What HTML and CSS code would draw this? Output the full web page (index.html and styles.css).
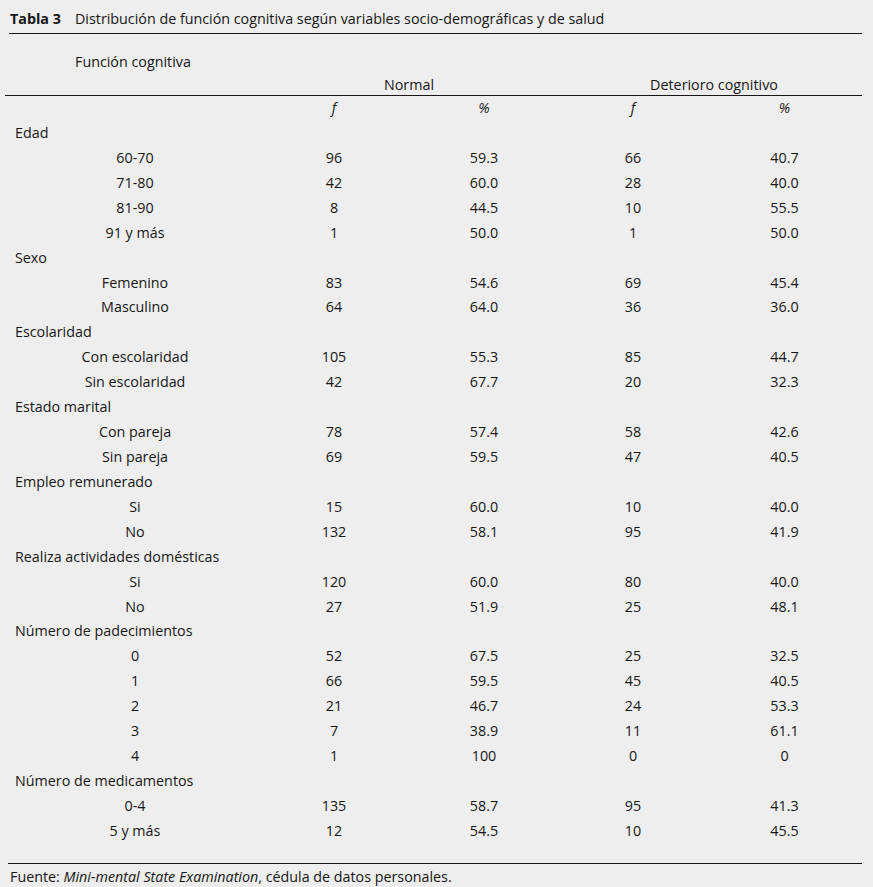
FILE: index.html
```html
<!DOCTYPE html>
<html lang="es">
<head>
<meta charset="utf-8">
<title>Tabla 3</title>
<link rel="stylesheet" href="styles.css">
</head>
<body>
<div class="page">
  <div class="caption"><span class="tnum">Tabla 3</span><span class="ttext">Distribución de función cognitiva según variables socio-demográficas y de salud</span></div>
  <div class="head1">Función cognitiva</div>
  <div class="head2">
    <div></div>
    <div class="span2">Normal</div>
    <div class="span2 det">Deterioro cognitivo</div>
  </div>
  <div class="row sub">
    <div></div><div class="it">f</div><div class="it">%</div><div class="it">f</div><div class="it">%</div>
  </div>
  <div class="body">
    <div class="row"><div class="cat">Edad</div></div>
    <div class="row"><div class="lab">60-70</div><div>96</div><div>59.3</div><div>66</div><div>40.7</div></div>
    <div class="row"><div class="lab">71-80</div><div>42</div><div>60.0</div><div>28</div><div>40.0</div></div>
    <div class="row"><div class="lab">81-90</div><div>8</div><div>44.5</div><div>10</div><div>55.5</div></div>
    <div class="row"><div class="lab">91 y más</div><div>1</div><div>50.0</div><div>1</div><div>50.0</div></div>
    <div class="row"><div class="cat">Sexo</div></div>
    <div class="row"><div class="lab">Femenino</div><div>83</div><div>54.6</div><div>69</div><div>45.4</div></div>
    <div class="row"><div class="lab">Masculino</div><div>64</div><div>64.0</div><div>36</div><div>36.0</div></div>
    <div class="row"><div class="cat">Escolaridad</div></div>
    <div class="row"><div class="lab">Con escolaridad</div><div>105</div><div>55.3</div><div>85</div><div>44.7</div></div>
    <div class="row"><div class="lab">Sin escolaridad</div><div>42</div><div>67.7</div><div>20</div><div>32.3</div></div>
    <div class="row"><div class="cat">Estado marital</div></div>
    <div class="row"><div class="lab">Con pareja</div><div>78</div><div>57.4</div><div>58</div><div>42.6</div></div>
    <div class="row"><div class="lab">Sin pareja</div><div>69</div><div>59.5</div><div>47</div><div>40.5</div></div>
    <div class="row"><div class="cat">Empleo remunerado</div></div>
    <div class="row"><div class="lab">Si</div><div>15</div><div>60.0</div><div>10</div><div>40.0</div></div>
    <div class="row"><div class="lab">No</div><div>132</div><div>58.1</div><div>95</div><div>41.9</div></div>
    <div class="row"><div class="cat">Realiza actividades domésticas</div></div>
    <div class="row"><div class="lab">Si</div><div>120</div><div>60.0</div><div>80</div><div>40.0</div></div>
    <div class="row"><div class="lab">No</div><div>27</div><div>51.9</div><div>25</div><div>48.1</div></div>
    <div class="row"><div class="cat">Número de padecimientos</div></div>
    <div class="row"><div class="lab">0</div><div>52</div><div>67.5</div><div>25</div><div>32.5</div></div>
    <div class="row"><div class="lab">1</div><div>66</div><div>59.5</div><div>45</div><div>40.5</div></div>
    <div class="row"><div class="lab">2</div><div>21</div><div>46.7</div><div>24</div><div>53.3</div></div>
    <div class="row"><div class="lab">3</div><div>7</div><div>38.9</div><div>11</div><div>61.1</div></div>
    <div class="row"><div class="lab">4</div><div>1</div><div>100</div><div>0</div><div>0</div></div>
    <div class="row"><div class="cat">Número de medicamentos</div></div>
    <div class="row"><div class="lab">0-4</div><div>135</div><div>58.7</div><div>95</div><div>41.3</div></div>
    <div class="row"><div class="lab">5 y más</div><div>12</div><div>54.5</div><div>10</div><div>45.5</div></div>
  </div>
  <div class="foot">Fuente: <em>Mini-mental State Examination</em>, cédula de datos personales.</div>
</div>
</body>
</html>
```
FILE: styles.css
```css
html, body {
  margin: 0;
  padding: 0;
  background: #eeeeee;
}
body {
  font-family: "Open Sans", "DejaVu Sans", sans-serif;
  font-size: 14.3px;
  color: #161616;
  width: 873px;
  height: 887px;
  overflow: hidden;
}
.page {
  padding: 0 11px 0 8px;
}
.caption {
  display: flex;
  height: 34px;
  padding-top: 9px;
  box-sizing: border-box;
  line-height: 20px;
  border-bottom: 1px solid #161616;
  margin-left: 1px;
}
.tnum {
  font-weight: bold;
  padding-left: 1px;
  width: 65px;
}
.head1 {
  margin-top: 18px;
  line-height: 20px;
  padding-left: 67px;
}
.head2 {
  display: grid;
  grid-template-columns: 251px 300px 303px;
  line-height: 20px;
  margin-top: 3px;
  border-bottom: 1px solid #161616;
  margin-left: -3px;
  padding-left: 3px;
}
.head2 > div {
  text-align: center;
}
.head2 .det {
  padding-left: 7px;
}
.row {
  display: grid;
  grid-template-columns: 251px 150px 150px 148px 155px;
  height: 24.93px;
  line-height: 24.93px;
}
.row > div {
  text-align: center;
  white-space: nowrap;
}
.row.sub {
  height: 25px;
  box-sizing: border-box;
  padding-top: 1px;
  line-height: 22px;
}
.row > .cat {
  text-align: left;
  padding-left: 7px;
  grid-column: 1 / 6;
}
.row > .lab {
  padding-left: 3px;
}
.it {
  font-style: italic;
}
.body {
  padding-bottom: 19px;
  border-bottom: 1px solid #161616;
}
.foot {
  line-height: 20px;
  padding-top: 3px;
  padding-left: 2px;
}
```
